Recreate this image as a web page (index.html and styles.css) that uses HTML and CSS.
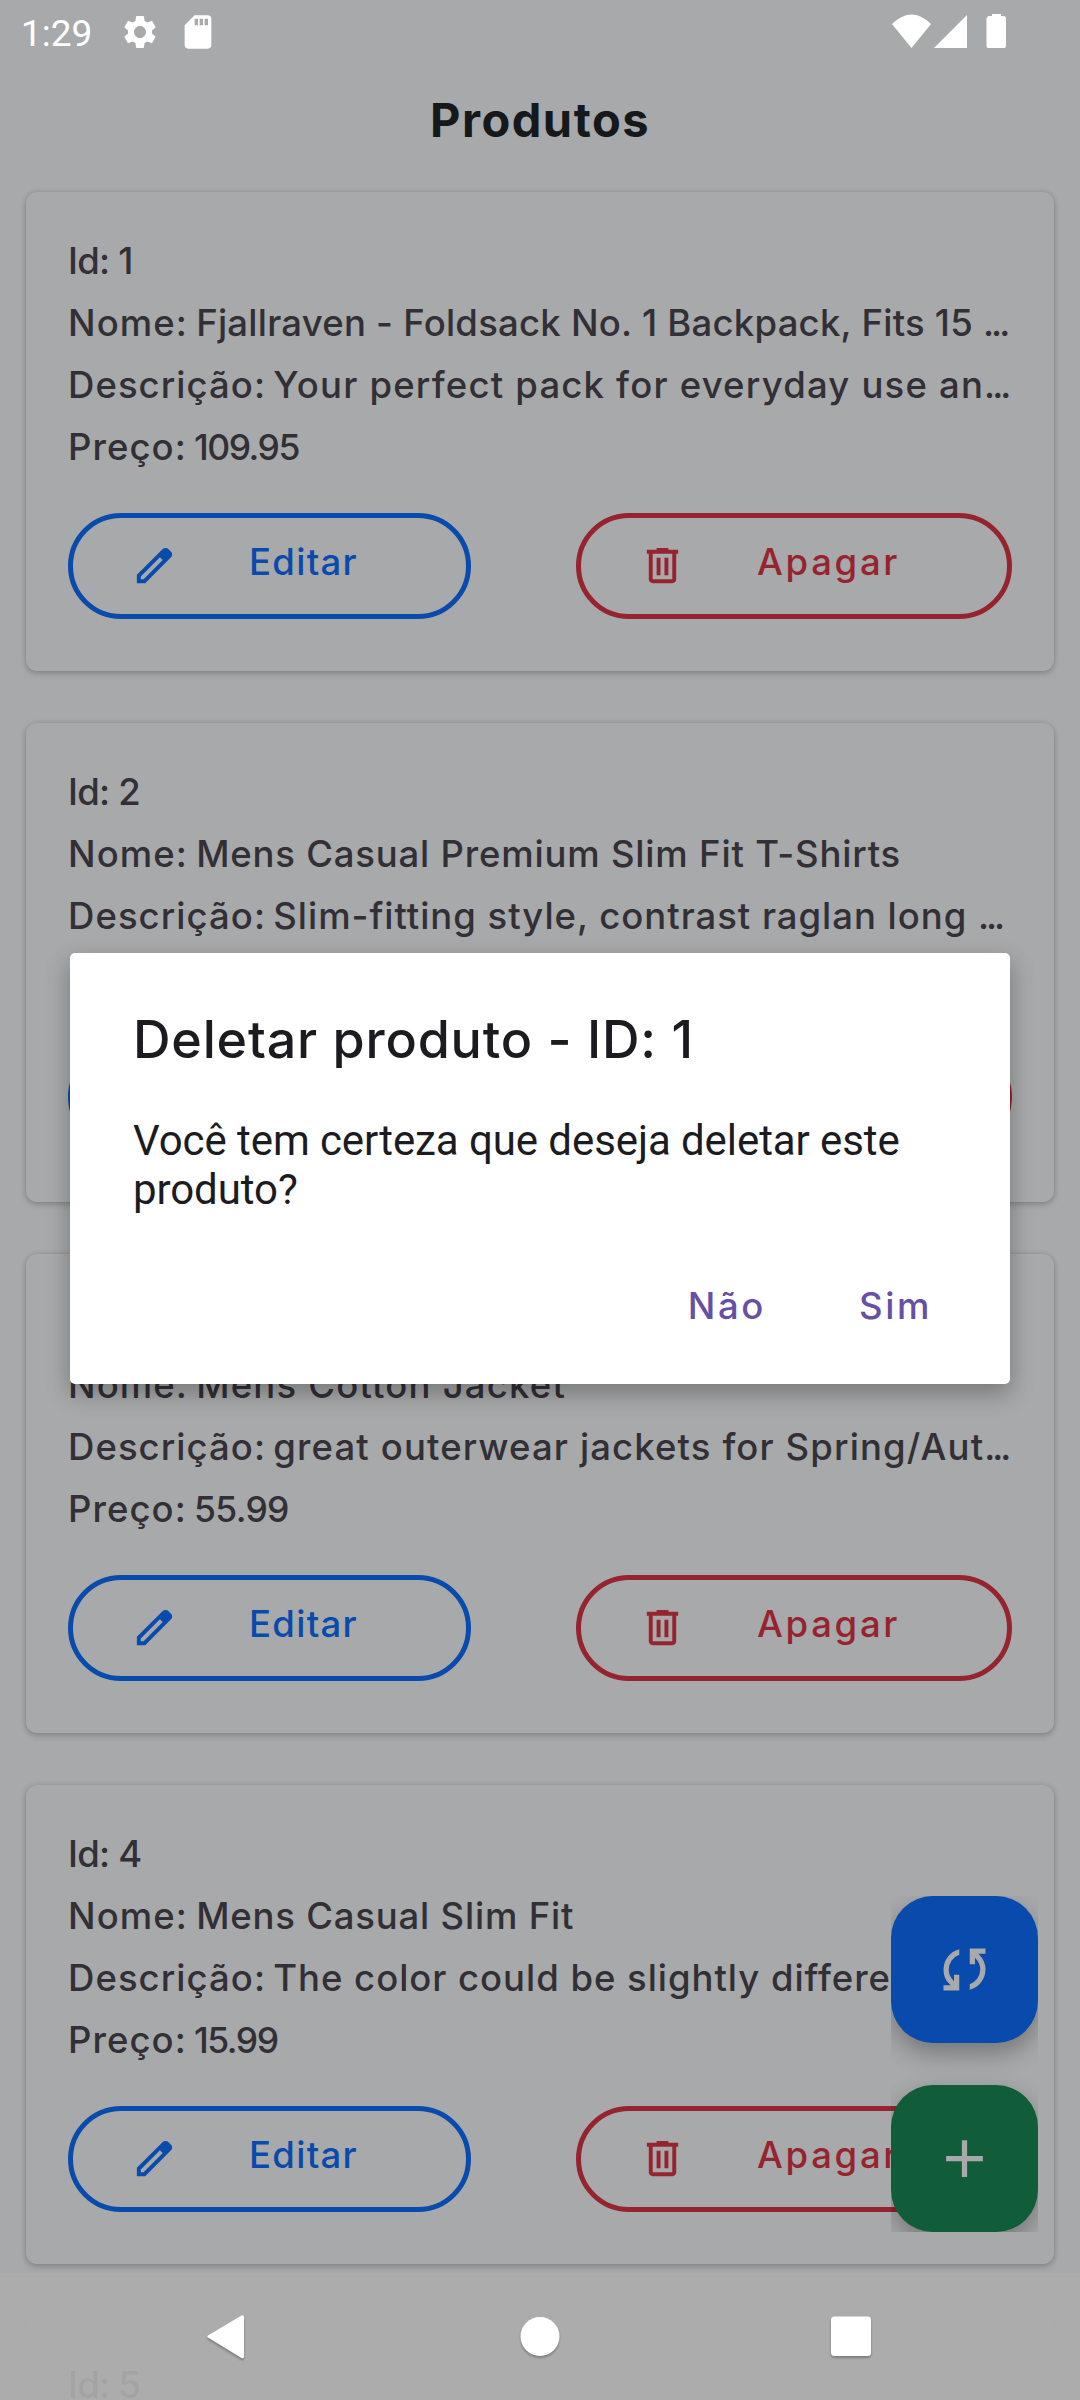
FILE: index.html
```html
<!DOCTYPE html>
<html lang="pt">
<head>
<meta charset="utf-8">
<title>Produtos</title>
<link rel="stylesheet" href="styles.css">
</head>
<body>
<svg class="defs" aria-hidden="true">
  <symbol id="edit" viewBox="0 -960 960 960"><path d="M200-200h57l391-391-57-57-391 391v57Zm-80 80v-170l528-527q12-11 26.5-17t30.5-6q16 0 31 6t26 18l55 56q12 11 17.5 26t5.5 30q0 16-5.5 30.5T817-647L290-120H120Zm499-499-28-29 57 57-29-28Z"/></symbol>
  <symbol id="trash" viewBox="0 -960 960 960"><path d="M280-120q-33 0-56.500-23.500T200-200v-520h-40v-80h200v-40h240v40h200v80h-40v520q0 33-23.500 56.500T680-120H280Zm400-600H280v520h400v-520ZM360-280h80v-360h-80v360Zm160 0h80v-360h-80v360Z"/></symbol>
</svg>
<div class="phone">
  <div class="status-bar">
    <span class="time">1:29</span>
    <svg class="status-icon" viewBox="0 0 24 24"><path d="M19.140 12.940c.04-.3.06-.61.06-.94 0-.32-.02-.64-.07-.94l2.030-1.580c.18-.14.23-.41.12-.61l-1.920-3.320c-.12-.22-.37-.29-.59-.22l-2.390.96c-.5-.38-1.030-.7-1.620-.94L14.400 2.810c-.04-.24-.24-.41-.48-.41h-3.840c-.24 0-.43.17-.47.41L9.250 5.350c-.59.24-1.130.57-1.620.94l-2.390-.96c-.22-.08-.47 0-.59.22L2.740 8.870c-.12.21-.08.47.12.61l2.030 1.580c-.05.3-.09.63-.09.94s.02.64.07.94l-2.030 1.580c-.18.14-.23.41-.12.61l1.920 3.320c.12.22.37.29.59.22l2.390-.96c.5.38 1.030.7 1.620.94l.36 2.540c.05.24.24.41.48.41h3.840c.24 0 .44-.17.47-.41l.36-2.540c.59-.24 1.130-.56 1.620-.94l2.390.96c.22.08.47 0 .59-.22l1.920-3.320c.12-.22.07-.47-.12-.61l-2.010-1.580zM12 15.600c-1.980 0-3.600-1.620-3.600-3.600s1.620-3.600 3.600-3.600 3.600 1.620 3.600 3.600-1.620 3.600-3.600 3.600z"/></svg>
    <svg class="status-icon" viewBox="0 0 24 24"><path d="M18 2h-8L4 8v12c0 1.100.9 2 2 2h12c1.100 0 2-.9 2-2V4c0-1.100-.9-2-2-2zm-6 6h-2V4h2v4zm3 0h-2V4h2v4zm3 0h-2V4h2v4z"/></svg>
    <svg class="signals" viewBox="0 0 116 36"><path d="M0 10Q19.500-9 39 10L19.500 34ZM42 34 75 1V34ZM95 4q0-2 2-2h3V0h9v2h2q3 0 3 2v28q0 2-2 2H96.500q-2 0-2-2V4Z"/></svg>
  </div>
  <h1 class="page-title">Produtos</h1>
  <main class="list">
    <article class="card">
      <p class="line id">Id: 1</p>
      <p class="line"><span class="label">Nome: </span><span class="track-2">Fjallraven - Foldsack No. 1 Backpack, Fits 15 <span class="dots">...</span></span></p>
      <p class="line"><span class="label tight">Descrição: </span><span class="track-12">Your perfect pack for everyday use an<span class="dots">...</span></span></p>
      <p class="line"><span class="label tight">Preço: </span><span class="price narrow">109.95</span></p>
      <div class="actions">
        <div class="button edit"><svg><use href="#edit"/></svg><span>Editar</span></div>
        <div class="button delete"><svg><use href="#trash"/></svg><span>Apagar</span></div>
      </div>
    </article>
    <article class="card">
      <p class="line id">Id: 2</p>
      <p class="line"><span class="label">Nome: </span><span class="track-8">Mens Casual Premium Slim Fit T-Shirts</span></p>
      <p class="line"><span class="label tight">Descrição: </span><span class="track-10">Slim-fitting style, contrast raglan long <span class="dots">...</span></span></p>
      <p class="line"><span class="label tight">Preço: </span><span class="price">22.3</span></p>
      <div class="actions">
        <div class="button edit"><svg><use href="#edit"/></svg><span>Editar</span></div>
        <div class="button delete"><svg><use href="#trash"/></svg><span>Apagar</span></div>
      </div>
    </article>
    <article class="card">
      <p class="line id">Id: 3</p>
      <p class="line"><span class="label">Nome: </span><span class="track-12">Mens Cotton Jacket</span></p>
      <p class="line"><span class="label tight">Descrição: </span><span class="track-11">great outerwear jackets for Spring/Aut<span class="dots">...</span></span></p>
      <p class="line"><span class="label tight">Preço: </span><span class="price">55.99</span></p>
      <div class="actions">
        <div class="button edit"><svg><use href="#edit"/></svg><span>Editar</span></div>
        <div class="button delete"><svg><use href="#trash"/></svg><span>Apagar</span></div>
      </div>
    </article>
    <article class="card">
      <p class="line id">Id: 4</p>
      <p class="line"><span class="label">Nome: </span><span class="track-8">Mens Casual Slim Fit</span></p>
      <p class="line"><span class="label tight">Descrição: </span><span class="track-10">The color could be slightly differen<span class="dots">...</span></span></p>
      <p class="line"><span class="label tight">Preço: </span><span class="price narrow">15.99</span></p>
      <div class="actions">
        <div class="button edit"><svg><use href="#edit"/></svg><span>Editar</span></div>
        <div class="button delete"><svg><use href="#trash"/></svg><span>Apagar</span></div>
      </div>
    </article>
    <article class="card">
      <p class="line id">Id: 5</p>
    </article>
  </main>

  <div class="fabs">
    <div class="fab sync"><svg viewBox="0 -960 960 960"><path d="M160-160v-80h110l-16-14q-52-46-73-105t-21-119q0-111 66.500-197.500T400-790v84q-72 26-116 88.500T240-478q0 45 17 87.500t53 78.500l10 10v-98h80v240H160Zm400-10v-84q72-26 116-88.500T720-482q0-45-17-87.500T650-648l-10-10v98h-80v-240h240v80H690l16 14q49 49 71.500 106.500T800-482q0 111-66.500 197.500T560-170Z"/></svg></div>
    <div class="fab add"><svg viewBox="0 -960 960 960"><path d="M440-440H200v-80h240v-240h80v240h240v80H520v240h-80v-240Z"/></svg></div>
  </div>

  <section class="dialog">
    <h2 class="dialog-title">Deletar produto - ID: 1</h2>
    <p class="dialog-text">Você tem certeza que deseja deletar este<br>produto?</p>
    <div class="dialog-actions"><span>Não</span><span>Sim</span></div>
  </section>

  <nav class="nav-bar">
    <svg viewBox="0 0 44 50"><path d="M34.500 3.500 1 23.500q-1.500 1 0 2L34.500 46q2.500 1 2.500-1.500V5q0-2.500-2.500-1.500Z"/></svg>
    <svg viewBox="0 0 44 50"><circle cx="22" cy="24.500" r="19.500"/></svg>
    <svg viewBox="0 0 44 50"><rect x="2" y="4.500" width="40" height="39.500" rx="3.500"/></svg>
  </nav>
</div>
</body>
</html>
```
FILE: styles.css
```css
* { box-sizing: border-box; }
body { margin: 0; }
h1, h2, p { margin: 0; font-weight: 500; }
svg { flex: none; fill: currentColor; }
.defs { position: absolute; width: 0; height: 0; }

.phone {
  position: relative;
  width: 1080px;
  height: 2400px;
  overflow: hidden;
  background: #a8a9aa;
  font: 500 36.5px/62px Inter, sans-serif;
  color: #322f36;
}

.status-bar {
  display: flex;
  align-items: center;
  height: 63px;
  padding-left: 21px;
  color: #fff;
}
.time { width: 99px; padding-top: 4px; font: 400 37px/40px Roboto, sans-serif; }
.status-icon { width: 40px; height: 40px; margin-right: 18px; }
.signals { width: 116px; height: 36px; margin: 0 72px 0 auto; }

.page-title {
  height: 129px;
  padding-top: 24px;
  text-align: center;
  font-size: 47px;
  line-height: 66px;
  font-weight: 700;
  letter-spacing: 1.5px;
  color: #16191c;
}

.list { display: flex; flex-direction: column; gap: 52px; padding: 0 26px; }
.card {
  flex: none;
  height: 479px;
  padding: 38px 42px 0;
  border-radius: 11px;
  background: #a8a9aa;
  box-shadow: 0 0 5px rgba(0, 0, 0, .13), 0 3px 6px rgba(0, 0, 0, .16);
}
.line { height: 62px; white-space: nowrap; }
.id { letter-spacing: -.75px; }
.label { letter-spacing: 1.05px; word-spacing: -2.5px; }
.tight { word-spacing: -3.5px; }
.price { font-size: 35.5px; letter-spacing: -.7px; }
.narrow { letter-spacing: -1.5px; }
.track-2 { letter-spacing: .24px; }
.track-8 { letter-spacing: .8px; }
.track-10 { letter-spacing: .96px; }
.track-11 { letter-spacing: 1.12px; }
.track-12 { letter-spacing: 1.2px; }
.dots { letter-spacing: -3px; }

.actions { display: flex; justify-content: space-between; margin-top: 35px; }
.button {
  display: flex;
  align-items: center;
  height: 106px;
  padding-left: 58px;
  border: 5px solid;
  border-radius: 53px;
}
.button svg { width: 47px; height: 47px; margin: 0 71px 2px 0; }
.button span { padding-bottom: 8px; }
.edit { width: 403px; color: #094bac; letter-spacing: 1.3px; }
.delete { width: 436px; color: #96242f; letter-spacing: 2.7px; }

.fabs {
  position: absolute;
  left: 891px;
  top: 1896px;
  display: flex;
  flex-direction: column;
  gap: 42px;
  height: 336px;
  overflow: hidden;
  color: #a8a9aa;
}
.fab {
  display: grid;
  place-items: center;
  width: 147px;
  height: 147px;
  border-radius: 42px;
  box-shadow: 0 10px 24px rgba(0, 0, 0, .3);
}
.fab svg { width: 63px; height: 63px; }
.sync { background: #094bac; }
.add { background: #115c39; }

.dialog {
  position: absolute;
  left: 70px;
  top: 953px;
  width: 940px;
  height: 431px;
  padding: 51px 63px 0;
  border-radius: 5px;
  background: #fff;
  color: #1c1b1f;
  box-shadow: 0 9px 24px rgba(0, 0, 0, .3);
}
.dialog-title { font-size: 52px; line-height: 71px; letter-spacing: .8px; }
.dialog-text {
  margin-top: 41px;
  font: 400 42px/49px Roboto, sans-serif;
  letter-spacing: -.08px;
}
.dialog-actions {
  display: flex;
  justify-content: flex-end;
  gap: 93px;
  margin-top: 61px;
  padding-right: 15px;
  letter-spacing: 2.6px;
  color: #6750a4;
}

.nav-bar {
  position: absolute;
  inset: auto 0 0;
  display: flex;
  justify-content: center;
  gap: 267px;
  height: 127px;
  padding-top: 39px;
  background: rgba(172, 172, 172, .93);
  color: #fff;
}
.nav-bar svg { width: 44px; height: 50px; filter: drop-shadow(0 2px 1px rgba(0, 0, 0, .28)); }
```
